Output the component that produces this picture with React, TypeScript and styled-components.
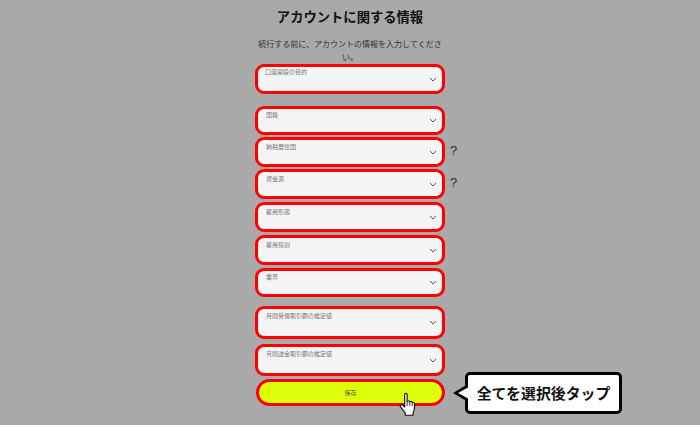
import React from 'react'
import styled, { createGlobalStyle } from 'styled-components'

const GlobalStyle = createGlobalStyle`
  html, body {
    margin: 0;
    padding: 0;
    background: #a9a9a9;
  }
  body {
    font-family: "Noto Sans CJK JP", "Liberation Sans", sans-serif;
  }
`

const fields = [
  { label: '口座開設の目的', height: 30, gap: 0, indent: 7, top: 1 },
  { label: '国籍', height: 29, gap: 12, indent: 8, top: 2 },
  { label: '納税居住国', height: 30, gap: 2, indent: 8, top: 3, help: true },
  { label: '資金源', height: 30, gap: 2, indent: 8, top: 3, help: true },
  { label: '雇用形態', height: 30, gap: 3, indent: 8, top: 3 },
  { label: '雇用役割', height: 30, gap: 3, indent: 8, top: 3 },
  { label: '業界', height: 29, gap: 3, indent: 8, top: 2 },
  { label: '月間受信取引額の推定値', height: 33, gap: 9, indent: 8, top: 3 },
  { label: '月間送金取引額の推定値', height: 32, gap: 5, indent: 8, top: 3 },
]

function Chevron() {
  return (
    <ChevronSvg viewBox="0 0 8 5">
      <path d="M1 1l3 3 3-3" fill="none" stroke="#555" strokeWidth="1" />
    </ChevronSvg>
  )
}

function HandCursor() {
  return (
    <HandSvg viewBox="0 0 18 26">
      <path
        d="M6 2.500c0-1.800 2.600-1.800 2.600 0v7.200c1.200-.8 2.400-.5 2.800.4 1-.6 2.200-.3 2.600.7 1-.4 2.400.2 2.400 1.600v4.600c0 2-.7 3.200-1.400 4.400v3H6.600v-2.600L1.600 15.600c-1.100-1.600.8-3.100 2.200-1.900L6 15.600z"
        fill="#fff"
        stroke="#111"
        strokeWidth="1.200"
        strokeLinejoin="round"
      />
      <path d="M8.600 10v4.500M11.400 10.400v4.100M14 11.300v3.300" stroke="#111" strokeWidth=".9" fill="none" />
    </HandSvg>
  )
}

export default function App() {
  return (
    <Page>
      <GlobalStyle />
      <Column>
        <Title>アカウントに関する情報</Title>
        <Intro>続行する前に、アカウントの情報を入力してください。</Intro>
        {fields.map((f) => (
          <FieldRow key={f.label} $gap={f.gap}>
            <Field $height={f.height}>
              <FieldLabel $indent={f.indent} $top={f.top}>{f.label}</FieldLabel>
              <Chevron />
            </Field>
            {f.help && <Help>?</Help>}
          </FieldRow>
        ))}
        <SaveRow>
          <SaveButton>
            保存
            <HandCursor />
          </SaveButton>
          <Callout>
            <CalloutTail />
            全てを選択後タップ
          </Callout>
        </SaveRow>
      </Column>
    </Page>
  )
}

const Page = styled.div`
  width: 700px;
  height: 425px;
  overflow: hidden;
  background: #a9a9a9;
`

const Column = styled.div`
  width: 190px;
  margin: 0 auto;
  display: flex;
  flex-direction: column;
`

const Title = styled.h1`
  margin: 8px -30px 0;
  font-size: 13.300px;
  line-height: 18px;
  font-weight: 700;
  color: #111;
  text-align: center;
  white-space: nowrap;
`

const Intro = styled.p`
  margin: 11px 0 0;
  height: 27px;
  font-size: 8px;
  line-height: 13px;
  color: #333;
  text-align: center;
`

const FieldRow = styled.div<{ $gap: number }>`
  display: flex;
  align-items: center;
  margin-top: ${(p) => p.$gap}px;
`

const Field = styled.div<{ $height: number }>`
  flex: 0 0 190px;
  display: flex;
  justify-content: space-between;
  align-items: center;
  box-sizing: border-box;
  height: ${(p) => p.$height}px;
  padding-right: 5px;
  background: #f4f4f4;
  border: 3px solid #f00;
  border-radius: 9px;
`

const FieldLabel = styled.span<{ $indent: number; $top: number }>`
  align-self: flex-start;
  padding: ${(p) => p.$top}px 0 0 ${(p) => p.$indent}px;
  font-size: 6px;
  line-height: 8px;
  color: #777;
`

const ChevronSvg = styled.svg`
  flex: none;
  width: 8px;
  height: 5px;
`

const Help = styled.span`
  flex: none;
  margin: 0 0 3px 5px;
  font-family: "Liberation Sans", sans-serif;
  font-size: 13px;
  line-height: 16px;
  color: #333;
`

const SaveRow = styled.div`
  display: flex;
  align-items: center;
  height: 27px;
  margin-top: 3px;
  padding-left: 1px;
`

const SaveButton = styled.div`
  position: relative;
  flex: 0 0 189px;
  box-sizing: border-box;
  height: 27px;
  background: #deff0a;
  border: 3px solid #f00;
  border-radius: 14px;
  font-size: 6px;
  line-height: 21px;
  color: #555;
  text-align: center;
`

const HandSvg = styled.svg`
  position: absolute;
  left: 140px;
  top: 10px;
  width: 17px;
  height: 25px;
`

const Callout = styled.div`
  position: relative;
  flex: 0 0 157px;
  box-sizing: border-box;
  height: 42px;
  margin-left: 20px;
  background: #fff;
  border: 3px solid #000;
  border-radius: 5px;
  font-size: 14.900px;
  line-height: 36px;
  font-weight: 700;
  color: #111;
  text-align: center;
  white-space: nowrap;
`

const CalloutTail = styled.span`
  position: absolute;
  left: -15px;
  top: 9px;
  width: 0;
  height: 0;
  border-style: solid;
  border-width: 9px 15px 9px 0;
  border-color: transparent #000 transparent transparent;

  &::after {
    content: '';
    position: absolute;
    left: 5px;
    top: -6px;
    width: 0;
    height: 0;
    border-style: solid;
    border-width: 6px 11px 6px 0;
    border-color: transparent #fff transparent transparent;
  }
`
